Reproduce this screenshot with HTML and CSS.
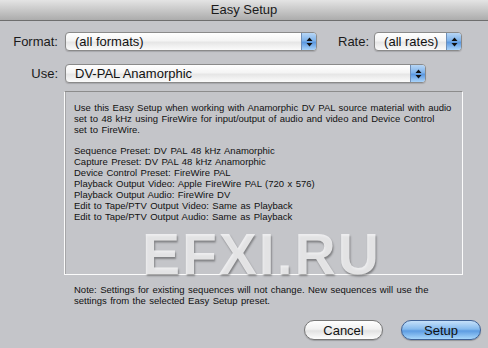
FILE: index.html
```html
<!DOCTYPE html>
<html lang="en">
<head>
    <meta charset="UTF-8">
    <title>Easy Setup</title>
    <link rel="stylesheet" href="styles.css">
</head>
<body>
    <div class="window">
        <div class="titlebar">Easy Setup</div>

        <div class="content">
            <div class="row">
                <span class="lbl">Format:</span>
                <div class="popup popup-format">
                    <span class="popup-text">(all formats)</span>
                    <span class="popup-arrows">
                        <svg width="7" height="10" viewBox="0 0 7 10"><path d="M3.5 0.5 L6.5 4 L0.5 4 Z M0.5 6 L6.5 6 L3.5 9.5 Z" fill="#111"/></svg>
                    </span>
                </div>
                <span class="lbl lbl-rate">Rate:</span>
                <div class="popup popup-rate">
                    <span class="popup-text">(all rates)</span>
                    <span class="popup-arrows">
                        <svg width="7" height="10" viewBox="0 0 7 10"><path d="M3.5 0.5 L6.5 4 L0.5 4 Z M0.5 6 L6.5 6 L3.5 9.5 Z" fill="#111"/></svg>
                    </span>
                </div>
            </div>

            <div class="row row-use">
                <span class="lbl">Use:</span>
                <div class="popup popup-use">
                    <span class="popup-text">DV-PAL Anamorphic</span>
                    <span class="popup-arrows">
                        <svg width="7" height="10" viewBox="0 0 7 10"><path d="M3.5 0.5 L6.5 4 L0.5 4 Z M0.5 6 L6.5 6 L3.5 9.5 Z" fill="#111"/></svg>
                    </span>
                </div>
            </div>

            <div class="desc">
                <p>Use this Easy Setup when working with Anamorphic DV PAL source material with audio<br>
                set to 48 kHz using FireWire for input/output of audio and video and Device Control<br>
                set to FireWire.</p>
                <p>Sequence Preset: DV PAL 48 kHz Anamorphic<br>
                Capture Preset: DV PAL 48 kHz Anamorphic<br>
                Device Control Preset: FireWire PAL<br>
                Playback Output Video: Apple FireWire PAL (720 x 576)<br>
                Playback Output Audio: FireWire DV<br>
                Edit to Tape/PTV Output Video: Same as Playback<br>
                Edit to Tape/PTV Output Audio: Same as Playback</p>
            </div>

            <p class="note">Note: Settings for existing sequences will not change. New sequences will use the<br>
            settings from the selected Easy Setup preset.</p>

            <div class="buttons">
                <button class="btn btn-cancel">Cancel</button>
                <button class="btn btn-setup">Setup</button>
            </div>
        </div>

        <div class="watermark">EFXI.RU</div>
    </div>
</body>
</html>
```

FILE: styles.css
```css
* {
    box-sizing: border-box;
    margin: 0;
    padding: 0;
}

body {
    font-family: "Liberation Sans", Arial, sans-serif;
    background-color: #c4c5c9;
    color: #111;
}

.window {
    position: relative;
    width: 488px;
    height: 348px;
    overflow: hidden;
    background-color: #c4c5c9;
}

.titlebar {
    height: 21px;
    line-height: 20px;
    text-align: center;
    font-size: 13px;
    color: #1a1a1a;
    background: linear-gradient(#e4e4e4, #c8c8c8 50%, #acacac);
    border-bottom: 1px solid #6e6e6e;
}

.content {
    padding: 11px 0 0 0;
}

.row {
    display: flex;
    align-items: center;
    height: 19px;
}

.row-use {
    margin-top: 13px;
}

.lbl {
    width: 58px;
    margin-right: 7px;
    text-align: right;
    font-size: 13px;
    color: #1a1a1a;
}

.lbl-rate {
    width: auto;
    margin-left: 21px;
    margin-right: 5px;
}

/* aqua popup */
.popup {
    display: flex;
    height: 19px;
    border: 1px solid #8a8a8a;
    border-radius: 4px;
    overflow: hidden;
    background: linear-gradient(#ffffff, #f4f4f4 45%, #e6e6e6 55%, #fbfbfb);
    box-shadow: 0 1px 1px rgba(0, 0, 0, 0.15);
}

.popup-format { width: 252px; }
.popup-rate { width: 88px; }
.popup-use { width: 361px; }

.popup-text {
    flex-grow: 1;
    padding-left: 9px;
    font-size: 13px;
    line-height: 17px;
    white-space: nowrap;
}

.popup-arrows {
    display: flex;
    align-items: center;
    justify-content: center;
    width: 15px;
    border-left: 1px solid #6f8fb8;
    background: linear-gradient(#b7d6f6, #7fb3ea 45%, #5b98e0 55%, #a9d3fa);
}

.desc {
    width: 399px;
    height: 184px;
    margin: 8px 0 0 64px;
    padding: 10px 0 0 9px;
    border: 1px solid #fbfbfb;
    border-top-color: #8c8c8c;
    box-shadow: inset 1px 0 0 #a6a6a8;
    font-size: 9.5px;
    line-height: 11px;
    word-spacing: 0.8px;
    white-space: nowrap;
    color: #111;
}

.desc p {
    margin-bottom: 10px;
}

.note {
    margin: 9px 0 0 74px;
    font-size: 9.5px;
    line-height: 11px;
    word-spacing: 0.8px;
    white-space: nowrap;
}

.buttons {
    display: flex;
    justify-content: flex-end;
    gap: 18px;
    margin: 14px 7px 0 0;
}

.btn {
    height: 20px;
    border-radius: 10px;
    font-family: inherit;
    font-size: 13px;
    color: #111;
}

.btn-cancel {
    width: 79px;
    border: 1px solid #777;
    background: linear-gradient(#ffffff, #f1f1f1 45%, #e2e2e2 55%, #fdfdfd);
    box-shadow: 0 1px 1px rgba(0, 0, 0, 0.2);
}

.btn-setup {
    width: 80px;
    border: 1px solid #3f6296;
    background: linear-gradient(#c5e0fa, #86bbee 45%, #5d9ce2 55%, #a7d6fb);
    box-shadow: 0 1px 1px rgba(0, 0, 0, 0.25);
}

.watermark {
    position: absolute;
    left: 142px;
    top: 231px;
    font-family: "Liberation Sans", Arial, sans-serif;
    font-weight: bold;
    font-size: 57px;
    line-height: 46px;
    letter-spacing: 2px;
    color: rgba(244, 244, 246, 0.85);
    text-shadow: 1px 2px 2px rgba(0, 0, 0, 0.35);
    white-space: nowrap;
}
```
